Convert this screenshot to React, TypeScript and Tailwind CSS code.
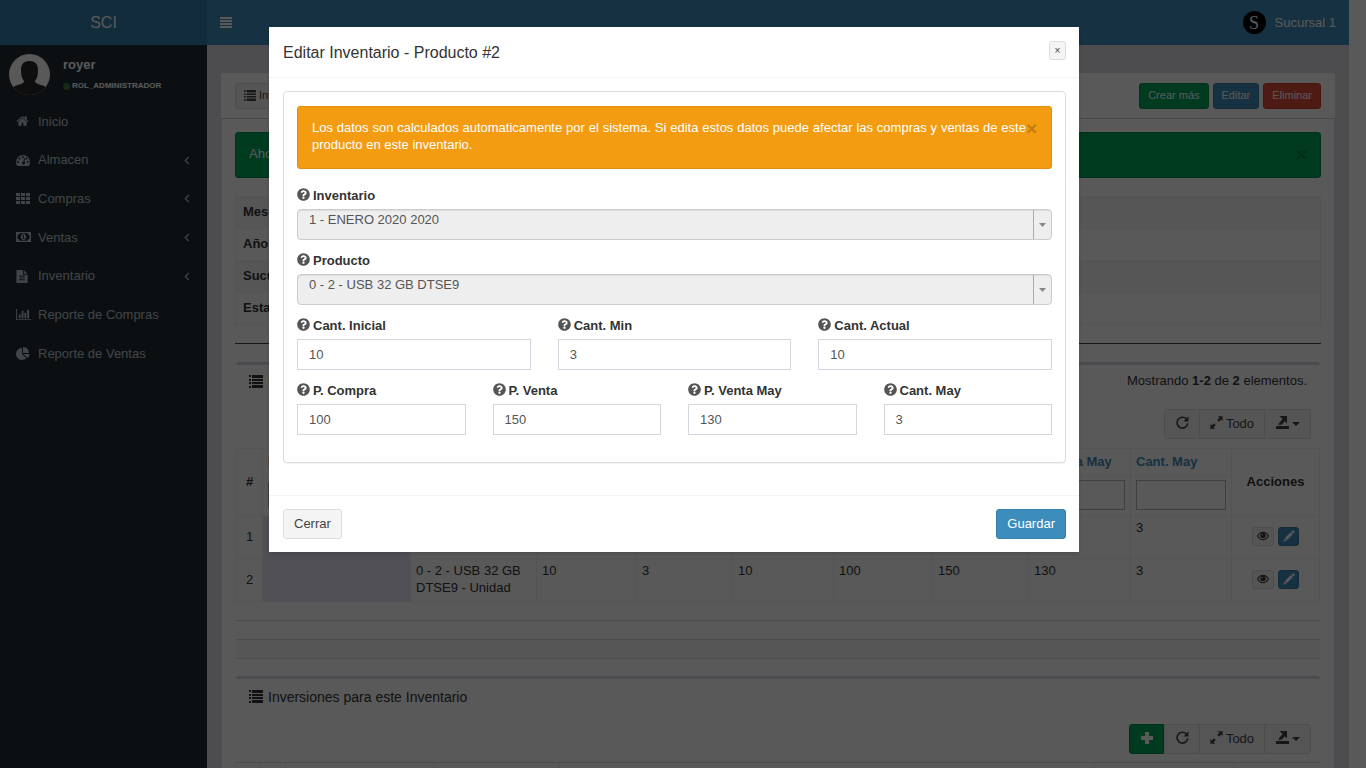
import React from "react";
import { FaQuestionCircle } from "react-icons/fa";

type IconProps = { className?: string };

const HomeIcon = ({ className }: IconProps) => (
  <svg viewBox="0 0 1792 1792" fill="currentColor" className={className} aria-hidden="true">
    <path d="M1472 992v480q0 26-19 45t-45 19h-384v-384h-256v384h-384q-26 0-45-19t-19-45v-480q0-1 .5-3t.5-3l575-474 575 474q1 2 1 6zm223-69l-62 74q-8 9-21 11h-3q-13 0-21-7l-692-577-692 577q-12 8-24 7-13-2-21-11l-62-74q-8-10-7-23.5t11-21.5l719-599q32-26 76-26t76 26l244 204v-195q0-14 9-23t23-9h192q14 0 23 9t9 23v408l219 182q10 8 11 21.5t-7 23.5z" />
  </svg>
);

const DashboardIcon = ({ className }: IconProps) => (
  <svg viewBox="0 0 1792 1792" fill="currentColor" fillRule="evenodd" className={className} aria-hidden="true">
    <path d="M0 1152a896 896 0 0 1 1792 0q0 261-141 483-19 29-54 29H195q-35 0-54-29Q0 1413 0 1152zM128 1152a128 128 0 1 0 256 0a128 128 0 1 0-256 0zM320 704a128 128 0 1 0 256 0a128 128 0 1 0-256 0zM768 512a128 128 0 1 0 256 0a128 128 0 1 0-256 0zM1216 704a128 128 0 1 0 256 0a128 128 0 1 0-256 0zM1408 1152a128 128 0 1 0 256 0a128 128 0 1 0-256 0zM955 1093l101-382q6-26 31-40t49-7 39 30 9 49l-101 382a192 192 0 1 1-128-32z" />
  </svg>
);

const GridIcon = ({ className }: IconProps) => (
  <svg viewBox="0 0 14 12" fill="currentColor" className={className} aria-hidden="true">
    <path d="M0 0h4v3H0zM5 0h4v3H5zM10 0h4v3h-4zM0 4h4v3H0zM5 4h4v3H5zM10 4h4v3h-4zM0 8h4v3H0zM5 8h4v3H5zM10 8h4v3h-4z" />
  </svg>
);

const MoneyIcon = ({ className }: IconProps) => (
  <svg viewBox="0 0 15 14" fill="currentColor" fillRule="evenodd" className={className} aria-hidden="true">
    <path d="M0 2h15v10H0zM3.500 3.300q0 1.700-2 1.700v4q2 0 2 1.700h8q0-1.700 2-1.700V5q-2 0-2-1.700zM7.500 3.700c1.500 0 2.600 1.500 2.600 3.300s-1.100 3.300-2.600 3.300S4.900 8.800 4.900 7s1.100-3.300 2.600-3.300zM6.200 8.200V9h2.700v-.8H8V5h-.8l-1 1 .5.600.5-.4v2z" />
  </svg>
);

const FileIcon = ({ className }: IconProps) => (
  <svg viewBox="128 0 1536 1792" fill="currentColor" fillRule="evenodd" className={className} aria-hidden="true">
    <path d="M1596 476q14 14 28 36h-472V40q22 14 36 28zM1120 640h544v1056q0 40-28 68t-68 28H224q-40 0-68-28t-28-68V96q0-40 28-68t68-28h800v544q0 40 28 68t68 28zM512 768v128h768V768zM512 1024v128h768v-128zM512 1280v128h768v-128z" />
  </svg>
);

const BarChartIcon = ({ className }: IconProps) => (
  <svg viewBox="0 0 2048 1792" fill="currentColor" className={className} aria-hidden="true">
    <path d="M640 896v512H384V896zM1024 384v1024H768V384zM2048 1536v128H0V128h128v1408zM1408 640v768h-256V640zM1792 256v1152h-256V256z" />
  </svg>
);

const PieChartIcon = ({ className }: IconProps) => (
  <svg viewBox="0 0 1792 1792" fill="currentColor" className={className} aria-hidden="true">
    <path d="M768 890l546 546q-106 108-247.5 168t-298.5 60q-209 0-385.5-103t-279.5-279.5-103-385.5 103-385.5 279.5-279.5 385.5-103v762zm187 6h773q0 157-60 298.5t-168 247.5zm709-128h-768v-768q209 0 385.5 103t279.5 279.5 103 385.5z" />
  </svg>
);

const MenuIcon = ({ className }: IconProps) => (
  <svg viewBox="0 0 12 11" fill="currentColor" shapeRendering="crispEdges" className={className} aria-hidden="true">
    <path d="M0 0h12v2H0zM0 3h12v2H0zM0 6h12v2H0zM0 9h12v2H0z" />
  </svg>
);

const AngleIcon = ({ className }: IconProps) => (
  <svg viewBox="0 0 6 9" fill="none" stroke="currentColor" strokeWidth="1.2" className={className} aria-hidden="true">
    <path d="M4.800 1L1.300 4.500 4.800 8" />
  </svg>
);

const PlusIcon = ({ className }: IconProps) => (
  <svg viewBox="0 0 12 12" fill="currentColor" shapeRendering="crispEdges" className={className} aria-hidden="true">
    <path d="M4 0h4v4h4v4H8v4H4V8H0V4h4z" />
  </svg>
);

const EyeIcon = ({ className }: IconProps) => (
  <svg viewBox="0 0 12 10" fill="none" stroke="currentColor" className={className} aria-hidden="true">
    <path d="M.600 5C2 2.600 3.800 1.300 6 1.300S10 2.600 11.400 5C10 7.400 8.200 8.700 6 8.700S2 7.400.600 5z" strokeWidth="1.1" />
    <circle cx="6" cy="4.500" r="2.700" fill="currentColor" stroke="none" />
    <circle cx="5.200" cy="3.800" r=".7" fill="#f4f4f4" stroke="none" />
  </svg>
);

const PencilIcon = ({ className }: IconProps) => (
  <svg viewBox="0 0 12 12" fill="currentColor" className={className} aria-hidden="true">
    <path d="M9.500.400q.6-.5 1.100 0l1 1q.5.500 0 1.100l-1.100 1.100L8.400 1.500zM7.900 2L10 4.100l-6.100 6.100-2.100-2.100zM1.300 8.600l2.100 2.100L.200 11.800z" />
  </svg>
);

const ListIcon = ({ className }: IconProps) => (
  <svg viewBox="0 0 14 13" fill="currentColor" className={className} aria-hidden="true">
    <path d="M0 0h2v2H0zM0 4h2v2H0zM0 7h2v2H0zM0 11h2v2H0zM3 0h11v3H3zM3 4h11v2H3zM3 7h11v2H3zM3 10h11v3H3z" />
  </svg>
);

const RepeatIcon = ({ className }: IconProps) => (
  <svg viewBox="0 0 14 14" fill="none" stroke="currentColor" strokeWidth="1.8" className={className} aria-hidden="true">
    <path d="M11.200 3.200A5.800 5.800 0 1 0 12.700 8" />
    <path d="M13.400.400v5.400H8z" fill="currentColor" stroke="none" />
  </svg>
);

const ResizeIcon = ({ className }: IconProps) => (
  <svg viewBox="0 0 14 14" fill="currentColor" className={className} aria-hidden="true">
    <path d="M8.500.400h5.100v5.100L12 3.900 9.700 6.200 7.800 4.300 10.100 2zM5.500 13.600H.400V8.500L2 10.100l2.300-2.300 1.900 1.900L3.900 12z" />
  </svg>
);

const ExportIcon = ({ className }: IconProps) => (
  <svg viewBox="0 0 13 13" fill="currentColor" className={className} aria-hidden="true">
    <path d="M0 10h13v3H0zM3.500 0H11v7.500L8.800 5.300 5.500 8.800H2L4 6l2.600-2.900z" />
  </svg>
);

const Caret = () => (
  <svg viewBox="0 0 8 4" fill="currentColor" className="h-1 w-2" aria-hidden="true">
    <path d="M0 0h8L4 4z" />
  </svg>
);

const menu = [
  { label: "Inicio", Icon: HomeIcon, size: "h-[14px] w-[13px]", sub: false },
  { label: "Almacen", Icon: DashboardIcon, size: "h-[14px] w-[14px]", sub: true },
  { label: "Compras", Icon: GridIcon, size: "h-[12px] w-[14px]", sub: true },
  { label: "Ventas", Icon: MoneyIcon, size: "h-[14px] w-[15px]", sub: true },
  { label: "Inventario", Icon: FileIcon, size: "h-[13px] w-[12px]", sub: true },
  { label: "Reporte de Compras", Icon: BarChartIcon, size: "h-[13px] w-[15px]", sub: false },
  { label: "Reporte de Ventas", Icon: PieChartIcon, size: "h-[14px] w-[14px]", sub: false },
];

function Sidebar() {
  return (
    <aside className="w-[207px] shrink-0 bg-[#222d32]">
      <a href="#" className="flex h-[45px] items-center justify-center bg-[#367fa9] text-base text-white">
        SCI
      </a>
      <div className="flex h-[57px] gap-[13px] px-[9px] pt-[9px]">
        <svg viewBox="0 0 41 41" className="h-[41px] w-[41px] rounded-full" role="img" aria-label="royer">
          <rect width="41" height="41" fill="#fff" />
          <path
            d="M20.500 7c5.500 0 8.500 3 8.500 9 0 5.500-1 8.500-3 11 0 1.500 1 2 3 3 4 1.300 7.500 2 9.500 4.500V41h-36v-6.500c2-2.500 5.500-3.200 9.500-4.500 2-1 3-1.500 3-3-2-2.500-3-5.500-3-11 0-6 3-9 8.500-9z"
            fill="#2a2a2a"
          />
        </svg>
        <div>
          <p className="pt-px text-[13px] leading-5 font-bold text-white">royer</p>
          <a href="#" className="mt-[3px] flex items-center gap-[2px] text-[8px] leading-4 font-bold text-white">
            <span className="h-[7px] w-[7px] rounded-full bg-[#3c763d]" />
            ROL_ADMINISTRADOR
          </a>
        </div>
      </div>
      <nav>
        <ul className="grid h-[271px] auto-rows-fr">
          {menu.map(({ label, Icon, size, sub }) => (
            <li key={label}>
              <a href="#" className="flex h-full items-center pr-[17px] pl-4 text-[13px] text-[#b8c7ce]">
                <span className="w-[22px]">
                  <Icon className={size} />
                </span>
                {label}
                {sub && <AngleIcon className="ml-auto h-[9px] w-[6px]" />}
              </a>
            </li>
          ))}
        </ul>
      </nav>
    </aside>
  );
}

const toolButton = "flex h-[30px] items-center border border-[#ddd] bg-[#f4f4f4] text-[13px] text-[#444]";

function Toolbar({ withAdd = false }: { withAdd?: boolean }) {
  return (
    <div className="flex justify-end pr-[9px]">
      {withAdd && (
        <button type="button" aria-label="Agregar" className="flex h-[30px] w-[35px] items-center justify-center rounded-l-[3px] border border-[#008d4c] bg-[#00a65a] pb-[2px] text-white">
          <PlusIcon className="h-3 w-3" />
        </button>
      )}
      <button type="button" aria-label="Recargar" className={`${toolButton} w-9 justify-center ${withAdd ? "" : "rounded-l-[3px]"}`}>
        <RepeatIcon className="mb-1 h-[13px] w-[13px]" />
      </button>
      <button type="button" className={`${toolButton} -ml-px w-[66px] justify-center gap-[3px]`}>
        <ResizeIcon className="mb-1 h-[13px] w-[13px]" />
        Todo
      </button>
      <button type="button" aria-label="Exportar" className={`${toolButton} -ml-px w-[47px] justify-center gap-[3px] rounded-r-[3px]`}>
        <ExportIcon className="mb-1 h-[13px] w-[13px]" />
        <Caret />
      </button>
    </div>
  );
}

const smallButton = "flex h-[26px] items-center rounded-[3px] border px-2 text-[11px]";
const headers = ["Producto", "Cant. Inicial", "Cant. Min", "Cant. Actual", "P. Compra", "P. Venta", "P. Venta May", "Cant. May"];
const rows = [
  ["0 - 1 - USB 16 GB DTSE9 - Unidad", "10", "3", "10", "100", "150", "130", "3"],
  ["0 - 2 - USB 32 GB DTSE9 - Unidad", "10", "3", "10", "100", "150", "130", "3"],
];
const headCell = "border border-[#f0f0f0] px-[5px] pt-[3px] pb-[5px]";
const bodyCell = "border border-[#f0f0f0] px-[5px] pt-[3px] pb-[5px] align-top";
const centerCell = "border border-[#f0f0f0] p-0 pb-[2px] text-center align-middle";

function ProductTable() {
  return (
    <table className="w-full table-fixed border-collapse text-[13px] leading-[17px] text-[#333]">
      <colgroup>
        <col className="w-[26px]" />
        <col />
        <col className="w-[126px]" />
        <col className="w-[100px]" />
        <col className="w-[96px]" />
        <col className="w-[101px]" />
        <col className="w-[99px]" />
        <col className="w-[96px]" />
        <col className="w-[102px]" />
        <col className="w-[101px]" />
        <col className="w-[88px]" />
      </colgroup>
      <thead>
        <tr className="h-[27px] border-t border-[#d2d6de] text-left">
          <th rowSpan={2} className={centerCell}>#</th>
          <th className={headCell}>Inventario</th>
          {headers.map((h) => (
            <th key={h} className={`${headCell} whitespace-nowrap`}>
              <a href="#" className="text-[#3c8dbc]">{h}</a>
            </th>
          ))}
          <th rowSpan={2} className={centerCell}>Acciones</th>
        </tr>
        <tr className="h-10">
          <td className={headCell}>
            <select aria-label="Inventario" className="block h-[30px] w-full appearance-none rounded-[4px] border border-[#aaa]" />
          </td>
          {headers.map((h) => (
            <td key={h} className={headCell}>
              <input aria-label={h} className="block h-[30px] w-full border border-[#b4b6bc] bg-transparent" />
            </td>
          ))}
        </tr>
      </thead>
      <tbody>
        {rows.map((row, i) => (
          <tr key={row[0]} className="h-[43px]">
            <td className={centerCell}>{i + 1}</td>
            {i === 0 && <td rowSpan={2} className="bg-[#e2e1f2]" />}
            {row.map((value, j) => (
              <td key={j} className={bodyCell}>{value}</td>
            ))}
            <td className={centerCell}>
              <div className="flex justify-center gap-1">
                <button type="button" aria-label="Ver" className="flex h-[19px] w-[22px] items-center justify-center rounded-[3px] border border-[#ddd] bg-[#f4f4f4] text-[#333]">
                  <EyeIcon className="h-[10px] w-3" />
                </button>
                <button type="button" aria-label="Editar" className="flex h-[19px] w-[21px] items-center justify-center rounded-[3px] border border-[#367fa9] bg-[#3c8dbc] text-white">
                  <PencilIcon className="h-3 w-3" />
                </button>
              </div>
            </td>
          </tr>
        ))}
      </tbody>
    </table>
  );
}

function Page() {
  return (
    <div className="flex min-w-0 flex-1 flex-col bg-[#dcdce6]">
      <header className="flex h-[45px] shrink-0 items-center justify-between bg-[#3c8dbc] px-[13px] text-white">
        <button type="button" aria-label="Menú">
          <MenuIcon className="h-[11px] w-3" />
        </button>
        <a href="#" className="flex items-center gap-[9px] text-[13px]">
          <span className="flex h-[23px] w-[23px] items-center justify-center rounded-full bg-black font-['Liberation_Serif',serif] text-lg leading-none">
            S
          </span>
          Sucursal 1
        </a>
      </header>
      <main className="px-[14px] pt-7">
        <div className="flex h-[46px] items-center gap-1 rounded-t-[3px] border-b border-[#ccc] bg-white px-[14px]">
          <button type="button" className={`${smallButton} mr-auto gap-[3px] border-[#ddd] bg-[#f4f4f4] text-[#444]`}>
            <ListIcon className="h-[11px] w-[12px]" />
            Inventarios
          </button>
          <button type="button" className={`${smallButton} border-[#008d4c] bg-[#00a65a] text-white`}>Crear más</button>
          <button type="button" className={`${smallButton} border-[#367fa9] bg-[#3c8dbc] text-white`}>Editar</button>
          <button type="button" className={`${smallButton} border-[#d73925] bg-[#dd4b39] text-white`}>Eliminar</button>
        </div>
        <div className="mx-px min-h-screen bg-white px-[13px] pt-[13px]">
          <div className="flex h-[46px] items-center justify-between rounded-[3px] border border-[#008d4c] bg-[#00a65a] px-[13px] pb-[2px] text-[13px] text-white">
            Ahora
            <button type="button" aria-label="Cerrar aviso" className="text-[19px] leading-none font-bold text-black opacity-20">×</button>
          </div>
          <table className="mt-[18px] w-full table-fixed border-collapse text-[13px] text-[#333]">
            <tbody>
              {["Mes", "Año", "Sucursal", "Estado"].map((name) => (
                <tr key={name} className="h-8 odd:bg-[#f7f7f7]">
                  <th className="w-[175px] border border-[#f0f0f0] px-[7px] pb-[2px] text-left">{name}</th>
                  <td className="border border-[#f0f0f0]" />
                </tr>
              ))}
            </tbody>
          </table>
          <hr className="mt-[18px] border-t border-[#444]" />
          <section className="mx-px mt-[18px] rounded-[3px] border-t-3 border-[#d2d6de]">
            <div className="flex h-11 items-start justify-between px-[13px] pt-[6px] text-[13px] leading-5 text-[#333]">
              <h2 className="flex items-center gap-[5px] text-sm leading-5">
                <ListIcon className="h-[13px] w-[14px]" />
                Productos
              </h2>
              <p>
                Mostrando <b>1-2</b> de <b>2</b> elementos.
              </p>
            </div>
            <Toolbar />
            <div className="mt-[9px]">
              <ProductTable />
            </div>
            <div className="mt-[18px] h-[19px] border-t border-[#d2d6de]" />
            <div className="h-5 border-t border-b border-t-[#d2d6de] border-b-[#ddd] bg-[#f5f5f5]" />
          </section>
          <section className="mx-px mt-[17px] rounded-[3px] border-t-3 border-[#d2d6de]">
            <h2 className="flex h-[45px] items-start gap-[5px] px-[13px] pt-[8px] text-sm leading-5 text-[#333]">
              <ListIcon className="mt-[3px] h-[13px] w-[14px]" />
              Inversiones para este Inventario
            </h2>
            <Toolbar withAdd />
            <div className="mt-2 grid h-16 grid-cols-[23px_26px_148px_126px_1fr_139px_86px] divide-x divide-[#eee] border-t border-l border-t-[#d2d6de] border-l-[#eee]">
              {[0, 1, 2, 3, 4, 5, 6].map((n) => (
                <span key={n} />
              ))}
            </div>
          </section>
        </div>
      </main>
    </div>
  );
}

function FieldLabel({ id, children }: { id: string; children: React.ReactNode }) {
  return (
    <label htmlFor={id} className="mb-1 flex items-center gap-[3px] text-[13px] leading-[18px] font-bold text-[#333]">
      <FaQuestionCircle className="mb-[3px] h-[13px] w-[13px] text-[#555]" />
      {children}
    </label>
  );
}

function SelectField({ id, label, value }: { id: string; label: string; value: string }) {
  return (
    <div>
      <FieldLabel id={id}>{label}</FieldLabel>
      <div className="relative">
        <select
          id={id}
          disabled
          className="block h-[31px] w-full appearance-none rounded-[4px] border border-[#ccc] bg-[#eee] pb-[12px] pl-[11px] text-[13px] text-[#555] opacity-100 shadow-[inset_0_1px_1px_rgba(0,0,0,0.075)]"
        >
          <option>{value}</option>
        </select>
        <span className="pointer-events-none absolute inset-y-px right-px flex w-[18px] items-center justify-center border-l border-[#aaa] text-[#888]">
          <svg viewBox="0 0 7 4" fill="currentColor" className="h-1 w-[7px]" aria-hidden="true">
            <path d="M0 0h7L3.500 4z" />
          </svg>
        </span>
      </div>
    </div>
  );
}

function TextField({ id, label, value }: { id: string; label: string; value: string }) {
  return (
    <div className="min-w-0">
      <FieldLabel id={id}>{label}</FieldLabel>
      <input id={id} defaultValue={value} className="block h-[31px] w-full border border-[#d2d6de] px-[11px] text-[13px] text-[#555]" />
    </div>
  );
}

function EditDialog() {
  return (
    <div className="absolute inset-0 flex items-start justify-center bg-black/65 pt-[27px] pr-[18px]">
      <form role="dialog" aria-labelledby="dialog-title" className="w-full max-w-[810px] bg-white shadow-[0_2px_3px_rgba(0,0,0,0.125)]">
        <div className="flex items-start justify-between border-b border-[#f4f4f4] py-[14px] pr-[13px] pl-[14px]">
          <h1 id="dialog-title" className="pt-[2px] text-base leading-5 text-[#333]">Editar Inventario - Producto #2</h1>
          <button type="button" aria-label="Cerrar ventana" className="flex h-[19px] w-[17px] items-center justify-center rounded-[3px] border border-[#ddd] bg-[#f4f4f4] text-[10px] text-[#444]">
            ×
          </button>
        </div>
        <div className="pt-[13px] pr-[13px] pb-8 pl-[14px]">
          <div className="rounded-[4px] border border-[#ddd] px-[13px] pt-[14px] pb-[27px] shadow-[0_1px_1px_rgba(0,0,0,0.05)]">
            <div className="flex rounded-[3px] border border-[#e08e0b] bg-[#f39c12] pt-3 pr-[14px] pb-[15px] pl-[14px] text-[13px] leading-[17px] text-white">
              <p className="flex-1 text-justify">
                Los datos son calculados automaticamente por el sistema. Si edita estos datos puede afectar las compras y ventas de este
                producto en este inventario.
              </p>
              <button type="button" aria-label="Cerrar aviso" className="h-5 text-[19px] leading-5 font-bold text-black opacity-20">×</button>
            </div>
            <div className="mt-[18px] flex flex-col gap-3">
              <SelectField id="inventario" label="Inventario" value="1 - ENERO 2020 2020" />
              <SelectField id="producto" label="Producto" value="0 - 2 - USB 32 GB DTSE9" />
              <div className="grid grid-cols-3 gap-[27px]">
                <TextField id="cant-inicial" label="Cant. Inicial" value="10" />
                <TextField id="cant-min" label="Cant. Min" value="3" />
                <TextField id="cant-actual" label="Cant. Actual" value="10" />
              </div>
              <div className="grid grid-cols-4 gap-[27px]">
                <TextField id="p-compra" label="P. Compra" value="100" />
                <TextField id="p-venta" label="P. Venta" value="150" />
                <TextField id="p-venta-may" label="P. Venta May" value="130" />
                <TextField id="cant-may" label="Cant. May" value="3" />
              </div>
            </div>
          </div>
        </div>
        <div className="flex justify-between border-t border-[#f4f4f4] py-[13px] pr-[13px] pl-[14px] text-[13px]">
          <button type="button" className="h-[30px] rounded-[3px] border border-[#ddd] bg-[#f4f4f4] px-[10px] text-[#444]">Cerrar</button>
          <button type="submit" className="h-[30px] rounded-[3px] border border-[#367fa9] bg-[#3c8dbc] px-[10px] text-white">Guardar</button>
        </div>
      </form>
    </div>
  );
}

export default function App() {
  return (
    <div className="relative h-screen overflow-hidden bg-white font-['Liberation_Sans',Arial,sans-serif]">
      <div className="flex h-full overflow-hidden pr-[17px]">
        <Sidebar />
        <Page />
      </div>
      <EditDialog />
    </div>
  );
}
